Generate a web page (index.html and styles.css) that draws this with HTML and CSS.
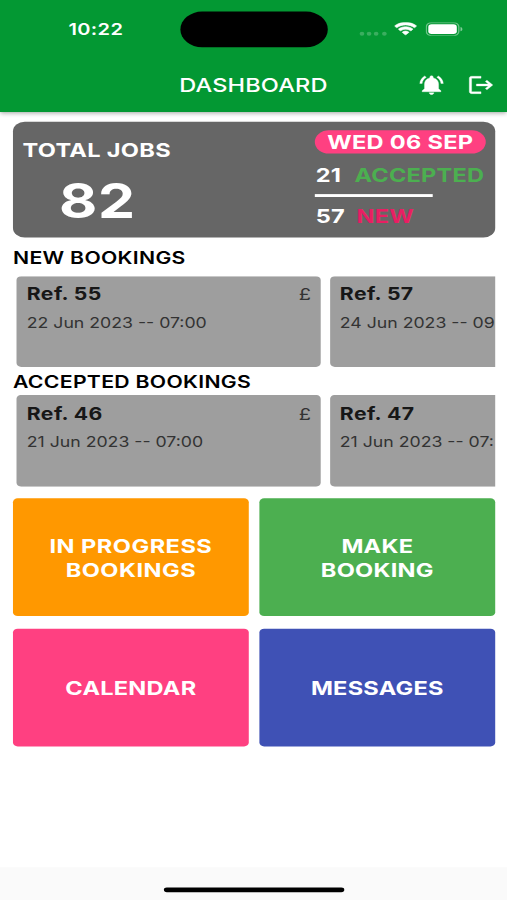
FILE: index.html
```html
<!DOCTYPE html>
<html lang="en">
<head>
<meta charset="utf-8">
<title>Dashboard</title>
<link rel="stylesheet" href="styles.css">
</head>
<body>
<div class="screen">
  <header class="header">
    <div class="status">
      <div class="time">10:22</div>
      <div class="island"></div>
      <div class="indicators">
        <div class="dots"><i></i><i></i><i></i><i></i></div>
        <svg class="wifi" viewBox="0 0 18 13" preserveAspectRatio="none"><path fill="#fff" stroke="#fff" stroke-width=".5" d="M9 2.6c2.5 0 4.8 1 6.5 2.6.1.1.3.1.5 0l1.200-1.300c.2-.1.2-.4 0-.5C12.600-1 5.400-1 .8 3.400c-.2.1-.2.4 0 .5L2 5.200c.2.100.4.100.5 0C4.200 3.600 6.500 2.600 9 2.600zm0 4.200c1.400 0 2.700.5 3.700 1.400.1.100.3.100.5 0l1.200-1.300c.2-.1.2-.4 0-.5-3-2.800-7.700-2.800-10.700 0-.2.100-.2.400 0 .5l1.200 1.300c.1.100.3.100.5 0 .9-.9 2.200-1.400 3.600-1.400zm2.400 3.100c.2-.1.2-.4 0-.5-1.400-1.200-3.400-1.200-4.800 0-.2.100-.2.400 0 .5l2.100 2.200c.1.100.4.100.5 0z"/></svg>
        <svg class="battery" viewBox="0 0 28 13" preserveAspectRatio="none"><rect x=".5" y=".5" width="24.500" height="12" rx="3.800" fill="none" stroke="#fff" stroke-opacity=".42"/><rect x="2" y="2" width="21.500" height="9" rx="2.500" fill="#fff"/><path d="M26.300 4.500v4c.8-.3 1.400-1.100 1.400-2s-.6-1.700-1.400-2z" fill="#fff" fill-opacity=".5"/></svg>
      </div>
    </div>
    <div class="appbar">
      <h1 class="title">DASHBOARD</h1>
      <div class="actions">
        <svg class="icon" viewBox="0 0 24 24"><path fill="#fff" stroke="#fff" stroke-width=".3" d="M7.580 4.080 6.150 2.650C3.750 4.480 2.170 7.300 2.030 10.500h2c.15-2.650 1.510-4.970 3.550-6.420zm12.390 6.420h2c-.15-3.200-1.730-6.020-4.120-7.850l-1.420 1.430c2.020 1.450 3.390 3.770 3.540 6.420zM18 11c0-3.070-1.640-5.640-4.500-6.320V4c0-.83-.67-1.500-1.500-1.500s-1.500.67-1.500 1.500v.68C7.630 5.360 6 7.920 6 11v5l-2 2v1h16v-1l-2-2v-5zm-6 11c.14 0 .27-.01.4-.04.65-.14 1.180-.58 1.440-1.180.1-.24.15-.5.15-.78h-4c.01 1.100.9 2 2.010 2z"/></svg>
        <svg class="icon" viewBox="0 0 24 24"><path fill="#fff" stroke="#fff" stroke-width=".3" d="m17 7-1.410 1.410L18.170 11H8v2h10.170l-2.580 2.580L17 17l5-5zM4 5h8V3H4c-1.100 0-2 .9-2 2v14c0 1.100.9 2 2 2h8v-2H4V5z"/></svg>
      </div>
    </div>
  </header>
  <main class="content">
    <section class="summary">
      <div class="total">
        <div class="total-label">TOTAL JOBS</div>
        <div class="total-value">82</div>
      </div>
      <div class="breakdown">
        <div class="date-pill">WED 06 SEP</div>
        <div class="count count-accepted">21 <span class="accepted">ACCEPTED</span></div>
        <div class="rule"></div>
        <div class="count count-new">57 <span class="new">NEW</span></div>
      </div>
    </section>
    <h2 class="heading">NEW BOOKINGS</h2>
    <div class="carousel">
      <article class="booking"><div class="booking-top"><b>Ref. 55</b><span class="pound">£</span></div><div class="when">22 Jun 2023 -- 07:00</div></article>
      <article class="booking"><div class="booking-top"><b>Ref. 57</b></div><div class="when">24 Jun 2023 -- 09</div></article>
    </div>
    <h2 class="heading heading-accepted">ACCEPTED BOOKINGS</h2>
    <div class="carousel">
      <article class="booking"><div class="booking-top"><b>Ref. 46</b><span class="pound">£</span></div><div class="when">21 Jun 2023 -- 07:00</div></article>
      <article class="booking"><div class="booking-top"><b>Ref. 47</b></div><div class="when">21 Jun 2023 -- 07:</div></article>
    </div>
    <nav class="tiles">
      <div class="tile orange">IN PROGRESS<br>BOOKINGS</div>
      <div class="tile green">MAKE<br>BOOKING</div>
      <div class="tile pink">CALENDAR</div>
      <div class="tile indigo">MESSAGES</div>
    </nav>
  </main>
  <footer class="home"><div class="home-bar"></div></footer>
</div>
</body>
</html>
```
FILE: styles.css
```css
* { box-sizing: border-box; }
html, body { margin: 0; width: 507px; height: 900px; overflow: hidden; background: #fff; }

/* Laid out on a 430 x 932 point canvas, scaled to the window. */
.screen {
  width: 430px;
  height: 932px;
  display: flex;
  flex-direction: column;
  transform: scale(1.17907, 0.96567);
  transform-origin: 0 0;
  font-family: Inter, "Liberation Sans", sans-serif;
  color: #000;
  background: #fff;
  overflow: hidden;
}

.header { height: 115.500px; flex: none; background: #039833; color: #fff; box-shadow: 0 2px 4px rgba(0, 0, 0, .32); z-index: 1; }
.status { height: 59px; padding-top: 12px; display: grid; grid-template-columns: 153px 125px 1fr; }
.time { padding: 8px 0 0 58px; font-size: 17px; line-height: 20px; font-weight: 600; letter-spacing: .3px; }
.island { height: 37px; border-radius: 19px; background: #000; }
.indicators { display: flex; padding: 10.500px 0 0 26.500px; }
.dots { display: flex; gap: 2.200px; padding: 10.500px 0 0 .5px; width: 29.500px; }
.dots i { width: 4px; height: 4px; border-radius: 50%; background: rgba(255, 255, 255, .22); }
.wifi { width: 20px; height: 14px; }
.battery { width: 31.500px; height: 14.500px; margin-left: 7px; }
.appbar { height: 56.500px; padding-left: 152px; display: flex; align-items: center; justify-content: space-between; }
.title { margin: 1px 0 0; font-size: 20px; line-height: 24px; font-weight: 500; letter-spacing: .1px; white-space: nowrap; }
.actions { display: flex; gap: 18px; padding: 1px 10px 0 0; }
.icon { width: 24px; height: 24px; }

.content { flex: 1; padding: 10.800px 10px 0 11px; }
.summary { height: 119.500px; border-radius: 10px; background: #666; color: #fff; display: flex; justify-content: space-between; font-weight: 700; overflow: hidden; }
.total { padding: 18px 0 0 8px; }
.total-label { font-size: 20px; line-height: 24px; letter-spacing: .25px; }
.total-value { margin-top: 10px; padding-left: 31px; font-size: 50px; line-height: 60px; letter-spacing: .5px; }
.breakdown { width: 153px; padding-top: 9px; }
.date-pill { width: 145px; height: 24px; border-radius: 12px; background: #ff4081; font-size: 20px; line-height: 25px; text-align: center; letter-spacing: .25px; white-space: nowrap; }
.count { padding-left: .8px; font-size: 20px; line-height: 24px; letter-spacing: .15px; white-space: nowrap; }
.count-accepted { margin-top: 9.800px; }
.accepted { color: #4caf50; margin-left: 6.500px; }
.rule { width: 100px; height: 3px; margin-top: 7.700px; background: #fff; }
.count-new { margin-top: 8.500px; }
.new { color: #e91e63; margin-left: 5px; }

.heading { margin: 0; height: 39.900px; padding-top: 10px; font-size: 18px; line-height: 22px; font-weight: 600; letter-spacing: .25px; white-space: nowrap; }
.heading-accepted { height: 28.800px; padding-top: 4.300px; }
.carousel { display: flex; gap: 7.500px; padding-left: 3.400px; overflow: hidden; }
.booking { flex: none; width: 258px; height: 94.700px; border-radius: 4px; background: #9e9e9e; padding: 8.700px 8.300px 0; color: #171717; }
.booking-top { display: flex; justify-content: space-between; font-size: 18px; line-height: 22px; letter-spacing: .35px; }
.booking-top b { font-weight: 700; }
.pound { font-size: 17px; color: #333; }
.when { margin-top: 8.200px; font-size: 15px; line-height: 20px; color: #333; letter-spacing: 0; white-space: nowrap; }

.tiles { margin-top: 12.500px; display: grid; grid-template-columns: 200px 200px; grid-auto-rows: 122px; gap: 13px 9px; }
.tile { padding-top: 1px; border-radius: 4px; display: flex; align-items: center; justify-content: center; text-align: center; color: #fff; font-size: 20px; line-height: 24px; font-weight: 700; letter-spacing: .2px; }
.orange { background: #ff9800; letter-spacing: .4px; }
.green { background: #4caf50; }
.pink { background: #ff4081; }
.indigo { background: #3f51b5; }

.home { height: 34px; flex: none; padding-top: 20.500px; background: #fafafa; }
.home-bar { width: 153px; height: 5px; margin-left: 138.500px; border-radius: 3px; background: #000; }
```
